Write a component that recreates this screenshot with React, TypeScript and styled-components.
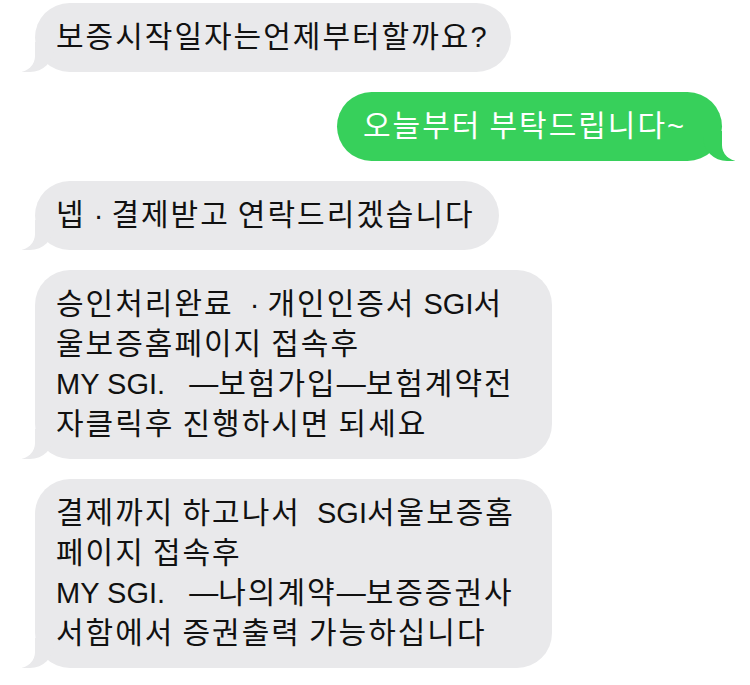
import React from 'react';
import styled, { createGlobalStyle, css } from 'styled-components';

// --- DATA ---
type Message = { id: number; fromMe: boolean; lines: string[]; wide?: boolean };

const messages: Message[] = [
    { id: 1, fromMe: false, lines: ['보증시작일자는언제부터할까요?'] },
    { id: 2, fromMe: true, lines: ['오늘부터 부탁드립니다~'] },
    { id: 3, fromMe: false, lines: ['넵 · 결제받고 연락드리겠습니다'] },
    {
        id: 4,
        fromMe: false,
        wide: true,
        lines: ['승인처리완료  · 개인인증서 SGI서', '울보증홈페이지 접속후', 'MY SGI.   —보험가입—보험계약전', '자클릭후 진행하시면 되세요'],
    },
    {
        id: 5,
        fromMe: false,
        wide: true,
        lines: ['결제까지 하고나서  SGI서울보증홈', '페이지 접속후', 'MY SGI.   —나의계약—보증증권사', '서함에서 증권출력 가능하십니다'],
    },
];

const GRAY = '#E9E9EB';
const GREEN = '#37D05B';
const HANGUL = /([\uAC00-\uD7A3]+)/;

// --- STYLES ---
const GlobalStyle = createGlobalStyle`
  html, body {
    margin: 0;
    padding: 0;
    background: #FFFFFF;
  }
`;

const Thread = styled.div`
  width: 750px;
  height: 685px;
  overflow: hidden;
  display: flex;
  flex-direction: column;
  gap: 20px;
  padding-top: 3px;
  box-sizing: border-box;
  font-family: 'Liberation Sans', 'Noto Sans CJK KR', sans-serif;
`;

const Bubble = styled.div<{ $fromMe: boolean; $wide?: boolean }>`
  position: relative;
  box-sizing: border-box;
  padding: ${p => (p.$fromMe ? '14px 38px 15px 26px' : '14px 24px 15px 21px')};
  border-radius: 35px;
  font-size: 29px;
  line-height: 40px;
  white-space: pre;
  background: ${p => (p.$fromMe ? GREEN : GRAY)};
  color: ${p => (p.$fromMe ? '#FFFFFF' : '#111111')};
  align-self: ${p => (p.$fromMe ? 'flex-end' : 'flex-start')};
  margin: ${p => (p.$fromMe ? '0 28px 0 0' : '0 0 0 35px')};
  ${p => p.$wide && css`width: 517px;`}

  &::before,
  &::after {
    content: '';
    position: absolute;
    bottom: 0;
    height: 30px;
  }

  ${p =>
        p.$fromMe
            ? css`
          &::before {
            right: -13px;
            width: 32px;
            background: ${GREEN};
            border-bottom-left-radius: 24px;
          }
          &::after {
            right: -40px;
            width: 40px;
            background: #FFFFFF;
            border-bottom-left-radius: 16px;
          }
        `
            : css`
          &::before {
            left: -13px;
            width: 32px;
            background: ${GRAY};
            border-bottom-right-radius: 24px;
          }
          &::after {
            left: -40px;
            width: 40px;
            background: #FFFFFF;
            border-bottom-right-radius: 16px;
          }
        `}
`;

const Line = styled.div`
  position: relative;
  z-index: 1;
`;

// hangul in the screenshot font runs wider than Noto's, latin does not
const Hangul = styled.span`
  font-size: 30px;
  letter-spacing: 2px;
`;

const renderLine = (text: string) =>
    text.split(HANGUL).map((part, i) =>
        HANGUL.test(part) ? <Hangul key={i}>{part}</Hangul> : <React.Fragment key={i}>{part}</React.Fragment>
    );

// --- Main Component ---
const App = () => (
    <>
        <GlobalStyle />
        <Thread>
            {messages.map(m => (
                <Bubble key={m.id} $fromMe={m.fromMe} $wide={m.wide}>
                    {m.lines.map((l, i) => (
                        <Line key={i}>{renderLine(l)}</Line>
                    ))}
                </Bubble>
            ))}
        </Thread>
    </>
);

export default App;
